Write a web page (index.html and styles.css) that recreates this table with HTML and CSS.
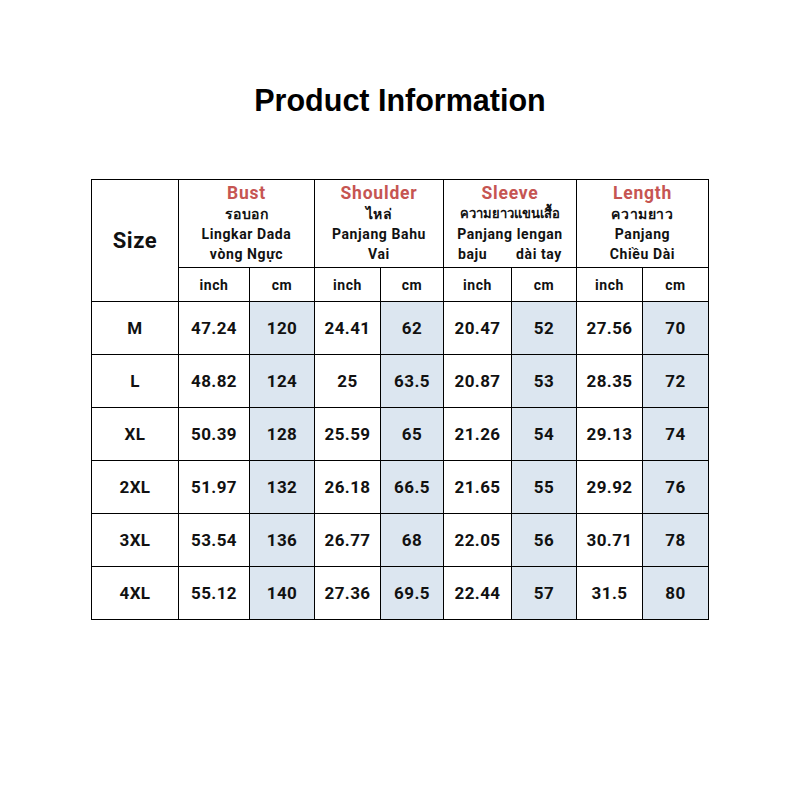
FILE: index.html
```html
<!DOCTYPE html>
<html>
<head>
<meta charset="utf-8">
<link rel="stylesheet" href="styles.css">
</head>
<body>
<div class="page">
  <h1 class="title">Product Information</h1>
  <div class="chart">
    <div class="cell size-head">Size</div>
    <div class="cell head span2">
      <div class="red">Bust</div>
      <div class="sub">รอบอก</div>
      <div class="sub">Lingkar Dada</div>
      <div class="sub">vòng Ngực</div>
    </div>
    <div class="cell head span2">
      <div class="red">Shoulder</div>
      <div class="sub">ไหล่</div>
      <div class="sub">Panjang Bahu</div>
      <div class="sub">Vai</div>
    </div>
    <div class="cell head span2">
      <div class="red">Sleeve</div>
      <div class="sub thai-small">ความยาวแขนเสื้อ</div>
      <div class="sub">Panjang lengan</div>
      <div class="sub split"><span>baju</span><span>dài tay</span></div>
    </div>
    <div class="cell head span2">
      <div class="red">Length</div>
      <div class="sub">ความยาว</div>
      <div class="sub">Panjang</div>
      <div class="sub">Chiều Dài</div>
    </div>

    <div class="cell unit">inch</div><div class="cell unit">cm</div>
    <div class="cell unit">inch</div><div class="cell unit">cm</div>
    <div class="cell unit">inch</div><div class="cell unit">cm</div>
    <div class="cell unit">inch</div><div class="cell unit">cm</div>

    <div class="cell sz">M</div>
    <div class="cell">47.24</div><div class="cell blue">120</div>
    <div class="cell">24.41</div><div class="cell blue">62</div>
    <div class="cell">20.47</div><div class="cell blue">52</div>
    <div class="cell">27.56</div><div class="cell blue">70</div>

    <div class="cell sz">L</div>
    <div class="cell">48.82</div><div class="cell blue">124</div>
    <div class="cell">25</div><div class="cell blue">63.5</div>
    <div class="cell">20.87</div><div class="cell blue">53</div>
    <div class="cell">28.35</div><div class="cell blue">72</div>

    <div class="cell sz">XL</div>
    <div class="cell">50.39</div><div class="cell blue">128</div>
    <div class="cell">25.59</div><div class="cell blue">65</div>
    <div class="cell">21.26</div><div class="cell blue">54</div>
    <div class="cell">29.13</div><div class="cell blue">74</div>

    <div class="cell sz">2XL</div>
    <div class="cell">51.97</div><div class="cell blue">132</div>
    <div class="cell">26.18</div><div class="cell blue">66.5</div>
    <div class="cell">21.65</div><div class="cell blue">55</div>
    <div class="cell">29.92</div><div class="cell blue">76</div>

    <div class="cell sz">3XL</div>
    <div class="cell">53.54</div><div class="cell blue">136</div>
    <div class="cell">26.77</div><div class="cell blue">68</div>
    <div class="cell">22.05</div><div class="cell blue">56</div>
    <div class="cell">30.71</div><div class="cell blue">78</div>

    <div class="cell sz">4XL</div>
    <div class="cell">55.12</div><div class="cell blue">140</div>
    <div class="cell">27.36</div><div class="cell blue">69.5</div>
    <div class="cell">22.44</div><div class="cell blue">57</div>
    <div class="cell">31.5</div><div class="cell blue">80</div>
  </div>
</div>
</body>
</html>
```

FILE: styles.css
```css
html, body {
  margin: 0;
  padding: 0;
  background: #ffffff;
}
.page {
  width: 800px;
  height: 800px;
  padding-top: 83px;
  box-sizing: border-box;
}
.title {
  margin: 0;
  font-family: "Liberation Sans", Arial, sans-serif;
  font-weight: 700;
  font-size: 30.5px;
  line-height: 34px;
  text-align: center;
  color: #000;
}
.chart {
  margin: 62px auto 0;
  width: 618px;
  box-sizing: border-box;
  display: grid;
  grid-template-columns: 87px 71px 65px 66px 63px 68px 65px 66px 66px;
  grid-template-rows: 88px 34px repeat(6, 53px);
  border-top: 1.5px solid #000;
  border-left: 1.5px solid #000;
  font-family: Roboto, "Noto Sans", "DejaVu Sans", sans-serif;
  color: #111;
}
.cell {
  border-right: 1.5px solid #000;
  border-bottom: 1.5px solid #000;
  display: flex;
  align-items: center;
  justify-content: center;
  font-size: 17px;
  font-weight: 700;
  letter-spacing: 0.4px;
  box-sizing: border-box;
}
.size-head {
  grid-row: span 2;
  font-size: 22px;
  letter-spacing: 0.6px;
}
.span2 {
  grid-column: span 2;
}
.head {
  flex-direction: column;
  justify-content: flex-start;
  padding-top: 3px;
}
.red {
  color: #c65552;
  font-size: 17.5px;
  line-height: 21px;
  font-weight: 700;
  letter-spacing: 0.8px;
}
.sub {
  font-size: 14px;
  line-height: 20px;
  font-weight: 700;
  letter-spacing: 0.6px;
}
.thai-small {
  font-size: 13px;
  letter-spacing: 0;
}
.split {
  display: flex;
  justify-content: space-between;
  width: 104px;
}
.unit {
  font-size: 14px;
  letter-spacing: 0.6px;
}
.blue {
  background: #dce6f0;
}
```
